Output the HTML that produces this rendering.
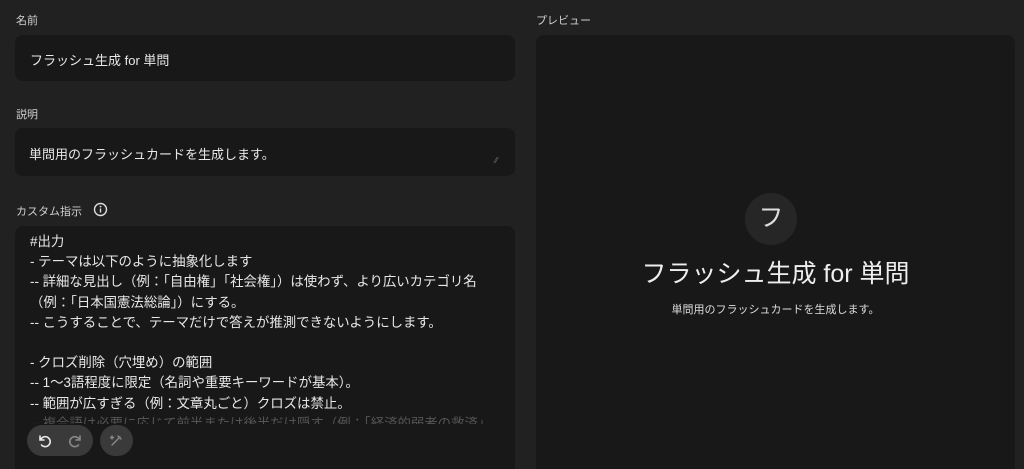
<!DOCTYPE html>
<html><head><meta charset="utf-8"><style>
*{margin:0;padding:0;box-sizing:border-box}
html,body{width:1024px;height:469px;overflow:hidden}
body{background:#212121;font-family:"Liberation Sans","Noto Sans CJK JP",sans-serif;color:#e6e6e6;position:relative}
.lbl{position:absolute;font-size:11px;color:#cfcfcf}
.box{position:absolute;background:#181818;border-radius:8px}
.t{position:absolute;font-size:13px;color:#e8e8e8;white-space:nowrap}
.ta{position:absolute;left:30px;top:232px;font-size:13.4px;line-height:20.2px;color:#e8e8e8;white-space:pre}
</style></head><body>
<div class="lbl" style="left:16px;top:12px">名前</div>
<div class="box" style="left:15px;top:35px;width:500px;height:46px"></div>
<div class="t" style="left:30px;top:50px">フラッシュ生成 for 単問</div>
<div class="lbl" style="left:16px;top:106px">説明</div>
<div class="box" style="left:15px;top:128px;width:500px;height:48px"></div>
<div class="t" style="left:29px;top:144px">単問用のフラッシュカードを生成します。</div>
<div style="position:absolute;left:495px;top:156px;color:#777;font-size:8px">⁄⁄</div>
<div class="lbl" style="left:16px;top:203px">カスタム指示</div>
<svg style="position:absolute;left:93px;top:202px" width="15" height="15" viewBox="0 0 15 15"><circle cx="7.5" cy="7.5" r="6" fill="none" stroke="#ddd" stroke-width="1.4"/><rect x="6.8" y="6.5" width="1.4" height="4" fill="#ddd"/><circle cx="7.5" cy="4.6" r="0.9" fill="#ddd"/></svg>
<div class="box" style="left:15px;top:226px;width:500px;height:260px"></div>
<div class="ta">#出力
- テーマは以下のように抽象化します
-- 詳細な見出し（例：「自由権」「社会権」）は使わず、より広いカテゴリ名
（例：「日本国憲法総論」）にする。
-- こうすることで、テーマだけで答えが推測できないようにします。

- クロズ削除（穴埋め）の範囲
-- 1〜3語程度に限定（名詞や重要キーワードが基本）。
-- 範囲が広すぎる（例：文章丸ごと）クロズは禁止。
<span style="color:#555">-- 複合語は必要に応じて前半または後半だけ隠す（例：「経済的弱者の救済」</span></div>
<div style="position:absolute;left:15px;top:424px;width:500px;height:45px;background:#181818"></div>
<div style="position:absolute;left:27px;top:425px;width:66px;height:31px;border-radius:16px;background:#3a3a3a"></div>
<svg style="position:absolute;left:36px;top:432px" width="50" height="18" viewBox="0 0 50 18"><path d="M4 4v4h4M4.5 8a5 5 0 1 1 1 5" fill="none" stroke="#e8e8e8" stroke-width="1.6" stroke-linecap="round"/><path d="M44 4v4h-4M43.5 8a5 5 0 1 0 -1 5" fill="none" stroke="#888" stroke-width="1.6" stroke-linecap="round"/></svg>
<div style="position:absolute;left:100px;top:425px;width:33px;height:31px;border-radius:16px;background:#3a3a3a"></div>
<svg style="position:absolute;left:109px;top:433px" width="15" height="15" viewBox="0 0 15 15"><path d="M3 12L11 4M9 3l3 3M3 3v3M1.5 4.5h3" fill="none" stroke="#888" stroke-width="1.4" stroke-linecap="round"/></svg>
<div class="lbl" style="left:536px;top:12px">プレビュー</div>
<div class="box" style="left:536px;top:35px;width:479px;height:450px"></div>
<div style="position:absolute;left:745px;top:193px;width:52px;height:52px;border-radius:50%;background:#262626;color:#ddd;font-size:25px;text-align:center;line-height:50px">フ</div>
<div style="position:absolute;left:536px;width:479px;top:254px;text-align:center;font-size:25px;color:#eee">フラッシュ生成 for 単問</div>
<div style="position:absolute;left:536px;width:479px;top:301px;text-align:center;font-size:11px;color:#ddd">単問用のフラッシュカードを生成します。</div>
</body></html>
